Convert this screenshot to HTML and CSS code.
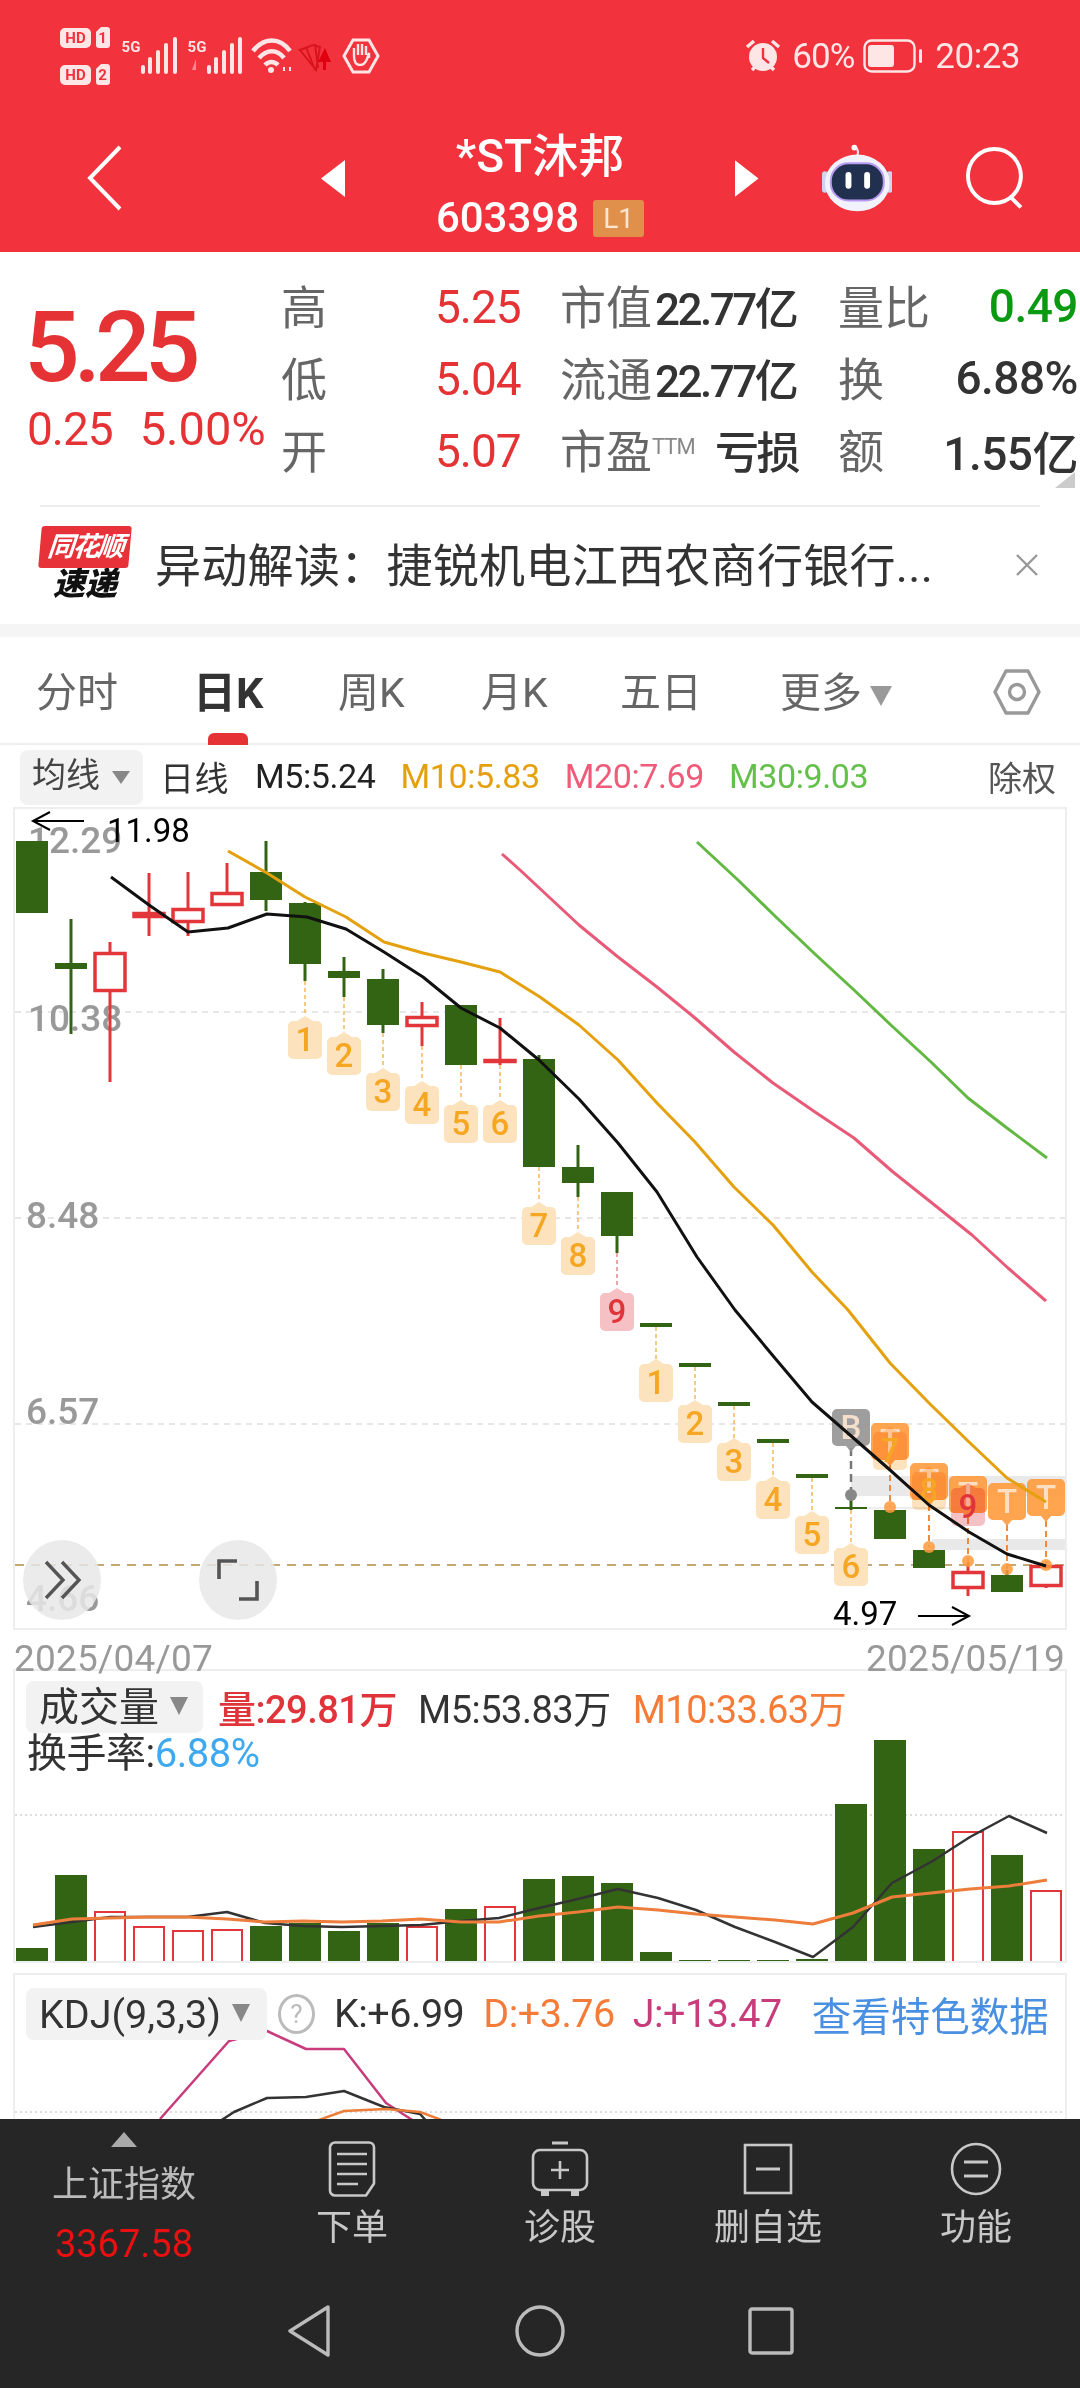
FILE: index.html
```html
<!DOCTYPE html>
<html lang="zh-CN">
<head>
    <meta charset="UTF-8">
    <meta name="viewport" content="width=device-width, initial-scale=1.0">
    <title>*ST沐邦 603398</title>
    <link rel="stylesheet" href="styles.css">
</head>
<body>
<div class="page">
    <div class="topbar">
        <div class="status">
            <svg class="status-left" width="320" height="60" viewBox="60 27 320 60">
                <rect x="60" y="28" width="31" height="20" rx="5" fill="#ffe6e6"/>
                <text x="75.5" y="43" class="hd">HD</text>
                <path d="M96 32l5-5h6a3 3 0 0 1 3 3v15a3 3 0 0 1-3 3h-8a3 3 0 0 1-3-3z" fill="#ffe6e6"/>
                <text x="102.5" y="43" class="hd">1</text>
                <rect x="60" y="65" width="31" height="20" rx="5" fill="#ffe6e6"/>
                <text x="75.5" y="80" class="hd">HD</text>
                <path d="M96 69l5-5h6a3 3 0 0 1 3 3v15a3 3 0 0 1-3 3h-8a3 3 0 0 1-3-3z" fill="#ffe6e6"/>
                <text x="102.5" y="80" class="hd">2</text>
                <text x="131" y="52" class="net">5G</text>
                <path d="M143 72v-5M150 72v-13M158 72v-20M166 72v-27M175 72v-33" stroke="#ffe6e6" stroke-width="4" stroke-linecap="round"/>
                <text x="197" y="52" class="net">5G</text>
                <path d="M192 70l4-11v11z" fill="#f98a90"/>
                <path d="M209 72v-5M216 72v-13M224 72v-20M232 72v-27M240 72v-33" stroke="#ffe6e6" stroke-width="4" stroke-linecap="round"/>
                <path d="M253 51c11-14 27-14 37 0M259 58c8-9 18-9 25 0M265 65c4-4 9-4 13 0" fill="none" stroke="#ffe6e6" stroke-width="4.5"/>
                <circle cx="271" cy="70" r="3" fill="#ffe6e6"/>
                <path d="M284 67v4M290 67v4" stroke="#ffe6e6" stroke-width="2"/>
                <path d="M300 50l13-5 7 2-4 23zM306 47l9 23M315 44l3 24" fill="none" stroke="#d9141f" stroke-width="2"/>
                <path d="M325 48l6 14 -5 0 0 8 -3 0 0 -8 -5 0z" fill="#e0000f"/>
                <path d="M353 40h16l9 16-9 16h-16l-9-16z" fill="none" stroke="#ffe6e6" stroke-width="3"/>
                <path d="M354 56v-8M358 55v-11M362 55v-11M366 55v-9M369 58v-5l-2 6c-2 5-4 6-7 6-4 0-6-3-6-9" fill="none" stroke="#ffe6e6" stroke-width="2.4"/>
            </svg>
            <div class="status-right">
                <svg width="36" height="36" viewBox="0 0 36 36">
                    <circle cx="18" cy="19" r="14" fill="#ffe6e6"/>
                    <path d="M18 10v10l6 5" fill="none" stroke="#f2323c" stroke-width="2.4"/>
                    <path d="M2 9l7-6M34 9l-7-6M7 32l3-3M29 32l-3-3" stroke="#ffe6e6" stroke-width="3.4"/>
                </svg>
                <span class="pct">60%</span>
                <svg width="62" height="34" viewBox="0 0 62 34">
                    <rect x="1.5" y="1.5" width="50" height="31" rx="7" fill="none" stroke="#ffe6e6" stroke-width="2.4"/>
                    <rect x="5" y="6" width="26" height="22" rx="3" fill="#ffe6e6"/>
                    <rect x="56" y="10" width="3" height="14" rx="1.5" fill="#ffe6e6"/>
                </svg>
                <span class="clock">20:23</span>
            </div>
        </div>
        <div class="nav">
            <div class="nav-side nav-left">
                <svg width="36" height="66" viewBox="0 0 36 66">
                    <path d="M33 2L3 33l30 31" fill="none" stroke="#fff" stroke-width="4"/>
                </svg>
                <svg class="tri" width="24" height="37" viewBox="0 0 24 37"><path d="M24 0v37L0 18.5z" fill="#fff"/></svg>
            </div>
            <div class="nav-title">
                <div class="stock-name">*ST沐邦</div>
                <div class="stock-code">603398<span class="level">L1</span></div>
            </div>
            <div class="nav-side nav-right">
                <svg class="tri" width="24" height="37" viewBox="0 0 24 37"><path d="M0 0v37l24-18.5z" fill="#fff"/></svg>
                <svg class="robot" width="72" height="68" viewBox="0 0 72 68">
                    <path d="M35 12c3-3 2-6 0-9" fill="none" stroke="#e9e9f7" stroke-width="2"/>
                    <circle cx="33" cy="3" r="3" fill="#fff"/>
                    <rect x="0" y="27" width="6" height="22" rx="3" fill="#cfd3ef"/>
                    <rect x="66" y="27" width="6" height="22" rx="3" fill="#cfd3ef"/>
                    <ellipse cx="36" cy="39" rx="33" ry="29" fill="#f1f2fb"/>
                    <rect x="9" y="19" width="54" height="38" rx="18" fill="#22304f" stroke="#b89bf0" stroke-width="2"/>
                    <rect x="24" y="28" width="6" height="17" rx="3" fill="#fff"/>
                    <rect x="43" y="28" width="6" height="17" rx="3" fill="#fff"/>
                </svg>
                <svg width="60" height="62" viewBox="0 0 60 62">
                    <ellipse cx="29" cy="29" rx="27" ry="27.5" fill="none" stroke="#fff" stroke-width="4"/>
                    <path d="M45 50l11 11" stroke="#fff" stroke-width="4"/>
                </svg>
            </div>
        </div>
    </div>

    <div class="quote">
        <div class="price">
            <div class="price-big">5.25</div>
            <div class="price-sub"><span class="chg">0.25</span><span class="pctchg">5.00%</span></div>
        </div>
        <div class="stats">
            <span class="lbl">高</span><span class="val up">5.25</span><span class="lbl">市值</span><span class="num">22.77亿</span><span></span><span class="lbl">量比</span><span class="num end down">0.49</span>
            <span class="lbl">低</span><span class="val up">5.04</span><span class="lbl">流通</span><span class="num">22.77亿</span><span></span><span class="lbl">换</span><span class="num end">6.88%</span>
            <span class="lbl">开</span><span class="val up">5.07</span><span class="lbl">市盈<sup class="ttm">TTM</sup></span><span class="num loss">亏损</span><span></span><span class="lbl">额</span><span class="num end">1.55亿</span>
        </div>
        <div class="corner"></div>
    </div>

    <div class="news">
        <div class="logo">
            <div class="logo-top">同花顺</div>
            <div class="logo-bottom">速递</div>
        </div>
        <div class="news-text">异动解读：捷锐机电江西农商行银行...</div>
        <svg class="news-close" width="24" height="24" viewBox="0 0 24 24"><path d="M2 2l20 20M22 2L2 22" stroke="#999" stroke-width="2.4"/></svg>
    </div>
    <div class="band"></div>

    <div class="tabs">
        <span class="tab t1">分时</span>
        <span class="tab t2 active">日K</span>
        <span class="tab t3">周K</span>
        <span class="tab t4">月K</span>
        <span class="tab t5">五日</span>
        <span class="tab t6">更多<i class="caret big"></i></span>
        <svg class="hex" width="48" height="46" viewBox="0 0 48 46">
            <path d="M13 2h22l11 21-11 21H13L2 23z" fill="none" stroke="#999" stroke-width="3.4" stroke-linejoin="round"/>
            <circle cx="24" cy="23" r="7.5" fill="none" stroke="#999" stroke-width="3.4"/>
        </svg>
    </div>

    <div class="legend">
        <span class="chip">均线<i class="caret"></i></span>
        <span class="ma-name">日线</span>
        <span class="ma m5">M5:5.24</span>
        <span class="ma m10">M10:5.83</span>
        <span class="ma m20">M20:7.69</span>
        <span class="ma m30">M30:9.03</span>
        <span class="fq">除权</span>
    </div>

    <div class="frame frame-k">
        <svg id="kline" width="1050" height="819" viewBox="15 809 1050 819"></svg>
        <span class="round-btn btn-a">
            <svg width="40" height="40" viewBox="0 0 40 40"><path d="M4 2l17 18L4 38M20 2l17 18-17 18" fill="none" stroke="#555" stroke-width="3.4"/></svg>
        </span>
        <span class="round-btn btn-b">
            <svg width="42" height="42" viewBox="0 0 42 42"><path d="M2 20V2h18M40 22v18H22" fill="none" stroke="#555" stroke-width="3.6"/></svg>
        </span>
    </div>
    <div class="dates"><span>2025/04/07</span><span>2025/05/19</span></div>

    <div class="frame frame-vol">
        <svg id="vol" width="1050" height="290" viewBox="15 1671 1050 290"></svg>
        <div class="vol-head">
            <span class="chip chip-lg">成交量<i class="caret small"></i></span>
            <span class="vh red">量:29.81万</span>
            <span class="vh dark">M5:53.83万</span>
            <span class="vh orange">M10:33.63万</span>
        </div>
        <div class="turnover">换手率:<span class="blue">6.88%</span></div>
    </div>

    <div class="frame frame-kdj">
        <svg id="kdj" width="1050" height="144" viewBox="15 1975 1050 144"></svg>
        <div class="kdj-head">
            <span class="chip chip-lg chip-kdj">KDJ(9,3,3)<i class="caret small"></i></span>
            <span class="help">?</span>
            <span class="vh dark">K:+6.99</span>
            <span class="vh orange">D:+3.76</span>
            <span class="vh magenta">J:+13.47</span>
            <span class="more">查看特色数据</span>
        </div>
    </div>

    <div class="footer">
        <div class="foot-tabs">
            <div class="foot-index">
                <i class="index-tri"></i>
                <div class="index-name">上证指数</div>
                <div class="index-val">3367.58</div>
            </div>
            <div class="foot-item">
                <svg width="48" height="56" viewBox="0 0 48 56">
                    <path d="M7 1.5h34a5 5 0 0 1 5 5v36l-8 12H7a5 5 0 0 1-5-5v-43a5 5 0 0 1 5-5z" fill="none" stroke="#c8c8c8" stroke-width="2.6"/>
                    <path d="M9 13h30M9 23h30M9 33h30M9 43h21" stroke="#c8c8c8" stroke-width="2.6"/>
                </svg>
                <span>下单</span>
            </div>
            <div class="foot-item">
                <svg width="58" height="56" viewBox="0 0 58 56">
                    <path d="M21 2h16" stroke="#c8c8c8" stroke-width="3"/>
                    <rect x="2" y="9" width="54" height="40" rx="7" fill="none" stroke="#c8c8c8" stroke-width="2.6"/>
                    <path d="M29 20v18M20 29h18" stroke="#c8c8c8" stroke-width="2.6"/>
                    <path d="M10 49v6h8v-6M40 49v6h8v-6" fill="#c8c8c8"/>
                </svg>
                <span>诊股</span>
            </div>
            <div class="foot-item">
                <svg width="50" height="52" viewBox="0 0 50 52">
                    <rect x="2" y="2" width="46" height="48" fill="none" stroke="#c8c8c8" stroke-width="2.6"/>
                    <path d="M13 26h24" stroke="#c8c8c8" stroke-width="3"/>
                </svg>
                <span>删自选</span>
            </div>
            <div class="foot-item">
                <svg width="52" height="54" viewBox="0 0 52 54">
                    <ellipse cx="26" cy="27" rx="24" ry="25" fill="none" stroke="#c8c8c8" stroke-width="2.6"/>
                    <path d="M14 20h24M14 34h24" stroke="#c8c8c8" stroke-width="3"/>
                </svg>
                <span>功能</span>
            </div>
        </div>
        <div class="sysnav">
            <span class="sys"><svg width="44" height="52" viewBox="0 0 44 52"><path d="M41 2L3 26l38 24z" fill="none" stroke="#bbb" stroke-width="3.4" stroke-linejoin="round"/></svg></span>
            <span class="sys"><svg width="50" height="52" viewBox="0 0 50 52"><ellipse cx="25" cy="26" rx="23" ry="24" fill="none" stroke="#bbb" stroke-width="3.4"/></svg></span>
            <span class="sys"><svg width="46" height="48" viewBox="0 0 46 48"><rect x="2" y="2" width="42" height="44" rx="2" fill="none" stroke="#bbb" stroke-width="3.4"/></svg></span>
        </div>
    </div>
</div>
<script src="chart.js"></script>
</body>
</html>
```

FILE: styles.css
```css
* {
    box-sizing: border-box;
}
body {
    margin: 0;
    background-color: #fff;
    font-family: Roboto, "Noto Sans CJK SC", sans-serif;
    color: #333;
}
.page {
    width: 1080px;
    height: 2388px;
    overflow: hidden;
    display: flex;
    flex-direction: column;
}

/* header */
.topbar {
    height: 252px;
    background-color: #f2323c;
    color: #fff;
}
.status {
    height: 100px;
    display: flex;
    justify-content: space-between;
    padding: 27px 60px 0 60px;
}
.status-left {
    display: block;
}
.hd {
    font-size: 15px;
    font-weight: 700;
    fill: #f2323c;
    text-anchor: middle;
}
.net {
    font-size: 15px;
    font-weight: 700;
    fill: #ffe6e6;
    text-anchor: middle;
}
.status-right {
    display: flex;
    align-items: center;
    height: 58px;
    color: #ffe6e6;
    font-size: 35px;
}
.pct {
    margin-left: 11px;
    margin-right: 9px;
    letter-spacing: -1px;
}
.clock {
    margin-left: 10px;
    letter-spacing: -0.5px;
}
.nav {
    height: 152px;
    display: flex;
}
.nav-side {
    width: 345px;
    display: flex;
    align-items: center;
    height: 152px;
    padding-top: 4px;
}
.nav-left {
    padding-left: 87px;
    justify-content: space-between;
}
.nav-right {
    padding-right: 55px;
}
.robot {
    margin-left: 63px;
    margin-right: 74px;
}
.nav-title {
    width: 390px;
    text-align: center;
    padding-top: 30px;
}
.stock-name {
    font-size: 46px;
    line-height: 52px;
    font-weight: 500;
}
.stock-code {
    font-size: 42px;
    line-height: 44px;
    margin-top: 14px;
    font-weight: 500;
    display: flex;
    justify-content: center;
    align-items: center;
}
.level {
    width: 51px;
    height: 37px;
    margin-left: 14px;
    background-color: #e0904a;
    border-radius: 3px;
    font-size: 28px;
    line-height: 37px;
    font-weight: 400;
    color: #fbe6d3;
}

/* quote block */
.quote {
    height: 253px;
    position: relative;
    display: flex;
}
.price {
    width: 281px;
    padding-left: 27px;
}
.price-big {
    margin-top: 40px;
    margin-left: -3px;
    font-size: 98px;
    line-height: 112px;
    font-weight: 500;
    letter-spacing: -6px;
    color: #e53234;
}
.price-sub {
    margin-top: -2px;
    display: flex;
    gap: 27px;
    font-size: 46px;
    line-height: 54px;
    color: #e53234;
}
.chg {
    letter-spacing: -1px;
}
.pctchg {
    font-size: 47px;
}
.stats {
    padding-top: 16px;
    display: grid;
    grid-template-columns: 154px 125px 95px 143px 40px 95px 145px;
    grid-auto-rows: 72px;
    align-items: center;
    font-size: 46px;
}
.lbl {
    color: #666;
    white-space: nowrap;
}
.ttm {
    font-size: 22px;
    vertical-align: 14px;
    line-height: 0;
    color: #888;
    letter-spacing: -1px;
}
.val {
    padding-top: 5px;
    letter-spacing: -1px;
}
.up {
    color: #e53234;
}
.num {
    padding-top: 4px;
    font-size: 44px;
    letter-spacing: -2.5px;
    white-space: nowrap;
    font-weight: 500;
}
.loss {
    text-align: right;
}
.end {
    font-size: 46px;
    letter-spacing: -0.5px;
    text-align: right;
}
.down {
    color: #0a9a12;
}
.corner {
    position: absolute;
    right: 5px;
    bottom: 17px;
    width: 0;
    height: 0;
    border-left: 20px solid transparent;
    border-bottom: 16px solid #ccc;
}

/* news row */
.news {
    height: 119px;
    position: relative;
    display: flex;
    align-items: center;
    padding-left: 40px;
    padding-bottom: 6px;
}
.news::before {
    content: "";
    position: absolute;
    top: 0;
    left: 40px;
    right: 40px;
    border-top: 2px solid #eee;
}
.logo {
    width: 90px;
    text-align: center;
    padding-top: 2px;
}
.logo-top {
    height: 42px;
    background-color: #e8323a;
    border-radius: 3px;
    color: #fff;
    font-size: 27px;
    line-height: 42px;
    font-weight: 700;
    font-style: italic;
    letter-spacing: -2px;
    transform: skewX(-5deg);
}
.logo-bottom {
    font-size: 32px;
    line-height: 32px;
    font-weight: 900;
    font-style: italic;
    color: #111;
}
.news-text {
    margin-left: 25px;
    font-size: 46px;
    letter-spacing: 0.3px;
    color: #333;
    white-space: nowrap;
}
.news-close {
    position: absolute;
    left: 1015px;
    top: 48px;
}
.band {
    height: 13px;
    background-color: #f5f5f5;
}

/* period tabs */
.tabs {
    height: 108px;
    position: relative;
    border-bottom: 2px solid #eee;
    font-size: 41px;
    color: #666;
}
.tab {
    position: absolute;
    top: 26px;
    line-height: 60px;
    white-space: nowrap;
}
.t1 { left: 36px; }
.t2 { left: 193px; }
.t3 { left: 338px; }
.t4 { left: 481px; }
.t5 { left: 620px; }
.t6 { left: 780px; }
.active {
    font-size: 43px;
    color: #333;
    font-weight: 700;
}
.active::after {
    content: "";
    position: absolute;
    left: 15px;
    top: 70px;
    width: 40px;
    height: 12px;
    border-radius: 6px 6px 0 0;
    background-color: #e53234;
}
.hex {
    position: absolute;
    left: 993px;
    top: 32px;
}
.caret {
    display: inline-block;
    width: 0;
    height: 0;
    margin-left: 12px;
    vertical-align: middle;
    border-left: 9px solid transparent;
    border-right: 9px solid transparent;
    border-top: 13px solid #888;
}
.caret.big {
    margin-left: 8px;
    border-left-width: 11px;
    border-right-width: 11px;
    border-top-width: 20px;
    border-top-color: #999;
}
.caret.small {
    margin-left: 11px;
    border-top-width: 18px;
    vertical-align: 6px;
}

/* moving average legend */
.legend {
    height: 62px;
    position: relative;
    font-size: 34px;
    display: flex;
    align-items: center;
    white-space: nowrap;
}
.chip {
    background-color: #f2f2f2;
    border-radius: 8px;
    color: #444;
}
.legend .chip {
    margin-left: 20px;
    width: 123px;
    height: 55px;
    margin-top: 2px;
    padding-left: 12px;
    line-height: 50px;
}
.ma-name {
    margin-left: 17px;
    letter-spacing: 0.5px;
    color: #333;
}
.ma {
    letter-spacing: -0.4px;
}
.m5 { margin-left: 26px; color: #222; }
.m10 { margin-left: 25px; color: #e5a00d; }
.m20 { margin-left: 25px; color: #ef5b78; }
.m30 { margin-left: 25px; color: #63c04a; }
.fq {
    position: absolute;
    left: 988px;
    color: #555;
}

/* chart panels */
.frame {
    position: relative;
    width: 1054px;
    margin-left: 13px;
    border: 2px solid #eee;
    flex: none;
}
.frame svg {
    display: block;
}
.frame-k {
    height: 823px;
}
.frame-vol {
    height: 294px;
}
.frame-kdj {
    height: 146px;
    margin-top: 10px;
    border-bottom: 0;
}
.round-btn {
    position: absolute;
    top: 731px;
    width: 78px;
    height: 80px;
    border-radius: 50%;
    background-color: rgba(232, 232, 232, 0.85);
    display: flex;
    align-items: center;
    justify-content: center;
}
.btn-a { left: 8px; }
.btn-b { left: 184px; }
.dates {
    height: 39px;
    position: relative;
    z-index: 1;
    padding: 11px 15px 0 14px;
    display: flex;
    justify-content: space-between;
    font-size: 37px;
    line-height: 36px;
    letter-spacing: 0.2px;
    color: #999;
}
.vol-head {
    position: absolute;
    left: 11px;
    top: 8px;
    display: flex;
    align-items: center;
    font-size: 38px;
    white-space: nowrap;
}
.chip-lg {
    display: block;
    width: 177px;
    height: 52px;
    padding-left: 13px;
    font-size: 40px;
    line-height: 54px;
    color: #333;
}
.vh {
    letter-spacing: -0.5px;
}
.vol-head .red { margin-left: 15px; color: #e0343a; font-weight: 500; }
.vol-head .dark { margin-left: 21px; color: #333; }
.vol-head .orange { margin-left: 22px; color: #f57b38; }
.turnover {
    position: absolute;
    left: 12px;
    top: 58px;
    font-size: 40px;
    line-height: 50px;
    color: #333;
    white-space: nowrap;
    letter-spacing: -0.5px;
}
.blue {
    color: #3fa9ef;
}
.kdj-head {
    position: absolute;
    left: 11px;
    top: 10px;
    display: flex;
    align-items: center;
    font-size: 39.5px;
    white-space: nowrap;
}
.chip-kdj {
    width: 241px;
    font-size: 39.5px;
    letter-spacing: 0;
}
.help {
    width: 37px;
    height: 40px;
    margin-left: 11px;
    border: 3px solid #bbb;
    border-radius: 50%;
    font-size: 26px;
    line-height: 34px;
    text-align: center;
    color: #bbb;
}
.kdj-head .dark { margin-left: 19px; color: #333; }
.kdj-head .orange { margin-left: 19px; color: #f57b38; }
.kdj-head .magenta { margin-left: 18px; color: #c93c7c; }
.more {
    margin-left: 30px;
    font-size: 39.5px;
    color: #4a90e2;
}

/* svg text */
.axis {
    font-family: Roboto, sans-serif;
    font-size: 37px;
    font-weight: 500;
    fill: #999;
}
.mark {
    font-family: Roboto, sans-serif;
    font-size: 33px;
    font-weight: 400;
    fill: #000;
}
.badge-num {
    font-family: Roboto, sans-serif;
    font-size: 33px;
    font-weight: 500;
    text-anchor: middle;
}
.mult {
    mix-blend-mode: multiply;
}

/* bottom bar */
.footer {
    height: 269px;
    flex: none;
    background-color: #262626;
    color: #c8c8c8;
}
.foot-tabs {
    height: 178px;
    display: flex;
}
.foot-index {
    width: 248px;
    text-align: center;
    padding-top: 13px;
}
.index-tri {
    display: block;
    width: 0;
    height: 0;
    margin: 0 auto;
    border-left: 13px solid transparent;
    border-right: 13px solid transparent;
    border-bottom: 15px solid #aaa;
}
.index-name {
    margin-top: 13px;
    font-size: 36px;
    line-height: 50px;
    color: #bbb;
}
.index-val {
    margin-top: 10px;
    font-size: 38px;
    line-height: 48px;
    color: #e81010;
}
.foot-item {
    width: 208px;
    height: 110px;
    margin-top: 22px;
    display: flex;
    flex-direction: column;
    align-items: center;
    font-size: 36px;
    line-height: 50px;
    color: #c8c8c8;
}
.foot-item svg {
    height: 56px;
    flex: none;
}
.foot-item span {
    margin-top: 6px;
}
.sysnav {
    display: flex;
    justify-content: center;
    padding-top: 8px;
}
.sys {
    width: 231px;
    display: flex;
    justify-content: center;
    align-items: center;
    height: 52px;
}
```

FILE: chart.js
```js
// colours of the candles and the lines
var GREEN = '#336414';
var RED = '#e3363b';
var SVGNS = 'http://www.w3.org/2000/svg';

// x centre of candle number i
function cx(i) {
    return 32 + 39 * i;
}

function add(svg, tag, attrs, text) {
    var el = document.createElementNS(SVGNS, tag);
    for (var k in attrs) {
        el.setAttribute(k, attrs[k]);
    }
    if (text !== undefined) {
        el.textContent = text;
    }
    svg.appendChild(el);
    return el;
}

function line(svg, x1, y1, x2, y2, color, width, dash) {
    var attrs = { x1: x1, y1: y1, x2: x2, y2: y2, stroke: color, 'stroke-width': width };
    if (dash) {
        attrs['stroke-dasharray'] = dash;
    }
    add(svg, 'line', attrs);
}

function poly(svg, pts, color, width) {
    add(svg, 'polyline', {
        points: pts.join(' '),
        fill: 'none',
        stroke: color,
        'stroke-width': width,
        'stroke-linejoin': 'round'
    });
}

// day candle: [wick top, wick bottom, body top, body bottom, up?]
var candles = [
    [841, 913, 841, 913, 0],
    [919, 1034, 963, 969, 0],
    [942, 1082, 952, 992, 1],
    [873, 936, 912, 918, 1],
    [872, 936, 908, 923, 1],
    [863, 906, 892, 906, 1],
    [841, 911, 872, 900, 0],
    [902, 981, 903, 964, 0],
    [957, 997, 971, 978, 0],
    [969, 1033, 979, 1025, 0],
    [1002, 1046, 1016, 1027, 1],
    [1005, 1065, 1005, 1065, 0],
    [1018, 1065, 1059, 1061, 1],
    [1055, 1167, 1059, 1167, 0],
    [1145, 1197, 1167, 1183, 0],
    [1192, 1253, 1192, 1236, 0],
    [1323, 1327, 1323, 1327, 0],
    [1363, 1367, 1363, 1367, 0],
    [1402, 1406, 1402, 1406, 0],
    [1439, 1443, 1439, 1443, 0],
    [1474, 1478, 1474, 1478, 0],
    [1497, 1510, 1507, 1509, 0],
    [1510, 1539, 1510, 1539, 0],
    [1550, 1568, 1550, 1568, 0],
    [1562, 1596, 1571, 1589, 1],
    [1570, 1592, 1575, 1592, 0],
    [1565, 1588, 1565, 1587, 1]
];

// sequence badges: [candle, number, tip y, red?]
var badges = [
    [7, 1, 1016], [8, 2, 1032], [9, 3, 1068], [10, 4, 1081], [11, 5, 1100], [12, 6, 1100],
    [13, 7, 1202], [14, 8, 1232], [15, 9, 1288, 1],
    [16, 1, 1359], [17, 2, 1400], [18, 3, 1438], [19, 4, 1476], [20, 5, 1511], [21, 6, 1543]
];

// the last three badges sit on top of the T flags
var lateBadges = [[22, 7, 1427], [23, 8, 1467], [24, 9, 1483, 1]];

// T flags: [candle, top y, circle y]
var tMarks = [[22, 1423, 1507], [23, 1463, 1547], [24, 1476, 1561], [25, 1483, 1569], [26, 1479, 1565]];

var ma5 = ['111,877', '149,905', '188,932', '228,928', '267,914', '307,917', '346,929', '384,952', '423,977', '461,1008', '500,1028', '539,1060', '579,1099', '618,1143', '657,1192', '697,1257', '735,1310', '774,1357', '812,1402', '850,1435', '890,1470', '929,1505', '969,1532', '1007,1554', '1046,1566'];
var ma10 = ['228,851', '267,873', '305,897', '346,917', '384,942', '423,953', '461,962', '500,972', '540,997', '579,1025', '618,1060', '657,1103', '695,1142', '734,1187', '773,1225', '812,1272', '848,1310', '890,1363', '929,1403', '969,1442', '1007,1478', '1046,1502'];
var ma20 = ['502,854', '520,870', '579,925', '618,957', '657,987', '695,1018', '734,1052', '773,1083', '815,1112', '854,1138', '893,1172', '932,1203', '972,1235', '1008,1268', '1046,1301'];
var ma30 = ['697,842', '738,880', '777,918', '816,955', '854,990', '893,1027', '931,1062', '968,1098', '1007,1128', '1047,1158'];

function badgeShape(svg, b, cls) {
    var x = cx(b[0]);
    var attrs = {
        d: 'M' + x + ' ' + b[2] + 'l8 5h4a5 5 0 0 1 5 5v28a5 5 0 0 1-5 5h-24a5 5 0 0 1-5-5v-28a5 5 0 0 1 5-5h4z',
        fill: b[3] ? '#f6c1c4' : '#fde3bd'
    };
    if (cls) {
        attrs['class'] = cls;
    }
    add(svg, 'path', attrs);
}

function badgeDigit(svg, b) {
    add(svg, 'text', {
        x: cx(b[0]),
        y: b[2] + 35,
        'class': 'badge-num',
        fill: b[3] ? '#e0343a' : '#f5a623'
    }, b[1]);
}

function flagBadge(svg, x, top, fill, label) {
    add(svg, 'path', {
        d: 'M' + (x - 14) + ' ' + top + 'h28a5 5 0 0 1 5 5v27a5 5 0 0 1-5 5h-9l-5 6-5-6h-9a5 5 0 0 1-5-5v-27a5 5 0 0 1 5-5z',
        fill: fill,
        'fill-opacity': 0.9
    });
    add(svg, 'text', { x: x, y: top + 30, 'class': 'badge-num', fill: '#fde6d2', 'fill-opacity': 0.9 }, label);
}

function drawKline() {
    var svg = document.getElementById('kline');
    var i;

    // grid
    [1012, 1218, 1424].forEach(function (y) {
        line(svg, 15, y, 1065, y, '#dfdfdf', 1.5, '6 5');
    });

    // price labels under the candles
    add(svg, 'text', { x: 28, y: 853, 'class': 'axis' }, '12.29');
    add(svg, 'text', { x: 28, y: 1031, 'class': 'axis' }, '10.38');
    add(svg, 'text', { x: 26, y: 1228, 'class': 'axis' }, '8.48');
    add(svg, 'text', { x: 26, y: 1424, 'class': 'axis' }, '6.57');
    add(svg, 'text', { x: 26, y: 1611, 'class': 'axis' }, '4.66');

    // grey bands around the last candles
    add(svg, 'rect', { x: 851, y: 1476, width: 214, height: 20, fill: '#e9e9e9' });
    add(svg, 'rect', { x: 932, y: 1539, width: 133, height: 11, fill: '#e9e9e9' });
    line(svg, 851, 1508, 1000, 1508, '#e9e9e9', 1.5);

    // last price line
    line(svg, 15, 1565, 1065, 1565, '#c3a878', 2, '9 7');

    // dotted stems from candle to badge
    badges.forEach(function (b) {
        var c = candles[b[0]];
        line(svg, cx(b[0]), c[1], cx(b[0]), b[2], b[3] ? '#e58a8c' : '#f5b95c', 1.5, '4 3');
    });

    // candles
    for (i = 0; i < candles.length; i++) {
        var c = candles[i];
        var x = cx(i);
        var color = c[4] ? RED : GREEN;
        line(svg, x, c[0], x, c[1], color, 3);
        if (c[4]) {
            add(svg, 'rect', { x: x - 15, y: c[2] + 1.5, width: 30, height: Math.max(c[3] - c[2] - 3, 1), fill: '#fff', stroke: RED, 'stroke-width': 3.5 });
        } else {
            add(svg, 'rect', { x: x - 16, y: c[2], width: 32, height: c[3] - c[2], fill: GREEN });
        }
    }

    // number badges
    badges.forEach(function (b) {
        badgeShape(svg, b);
        badgeDigit(svg, b);
    });

    // T flags, then the last badges tinted over them
    tMarks.forEach(function (t) {
        var x = cx(t[0]);
        line(svg, x, t[1] + 42, x, t[2], '#f08a3c', 2, '6 4');
        add(svg, 'circle', { cx: x, cy: t[2], r: 6, fill: '#ff9a3c', 'fill-opacity': 0.85 });
        flagBadge(svg, x, t[1], '#ff9a3c', 'T');
    });
    lateBadges.forEach(function (b) {
        badgeShape(svg, b, 'mult');
        badgeDigit(svg, b);
    });

    // buy flag
    line(svg, 851, 1448, 851, 1495, '#777', 2.5, '8 5');
    add(svg, 'circle', { cx: 851, cy: 1495, r: 6, fill: '#888' });
    flagBadge(svg, 851, 1409, '#939393', 'B');

    // moving averages
    poly(svg, ma30, '#63b843', 3);
    poly(svg, ma20, '#e85a78', 3);
    poly(svg, ma10, '#e5a00d', 3);
    poly(svg, ma5, '#111', 3);

    // high and low marks
    add(svg, 'path', { d: 'M84 821H33M50 812L33 821L50 830', fill: 'none', stroke: '#000', 'stroke-width': 2 });
    add(svg, 'text', { x: 107, y: 842, 'class': 'mark' }, '11.98');
    add(svg, 'text', { x: 833, y: 1625, 'class': 'mark' }, '4.97');
    add(svg, 'path', { d: 'M918 1616H969M952 1607L969 1616L952 1625', fill: 'none', stroke: '#000', 'stroke-width': 2 });
}

// volume bars: [top y, up?]
var volumes = [
    [1948, 0], [1875, 0], [1911, 1], [1926, 1], [1930, 1], [1929, 1], [1926, 0], [1923, 0], [1931, 0],
    [1923, 0], [1926, 1], [1909, 0], [1906, 1], [1879, 0], [1876, 0], [1883, 0], [1952, 0], [1960, 0],
    [1960, 0], [1960, 0], [1959, 0], [1804, 0], [1740, 0], [1849, 0], [1831, 1], [1855, 0], [1890, 1]
];

var volMa5 = ['33,1927', '72,1922', '110,1917', '148,1917', '187,1917', '227,1912', '265,1923', '303,1926', '342,1927', '382,1926', '421,1925', '461,1921', '499,1918', '539,1908', '578,1899', '618,1889', '658,1898', '696,1910', '735,1927', '775,1942', '813,1957', '853,1927', '892,1883', '931,1862', '970,1837', '1009,1816', '1047,1833'];
var volMa10 = ['33,1925', '72,1919', '110,1918', '148,1917', '187,1917', '227,1919', '265,1922', '303,1921', '342,1922', '382,1921', '421,1919', '461,1922', '499,1922', '539,1916', '578,1912', '618,1907', '658,1910', '696,1914', '735,1917', '775,1920', '813,1924', '853,1913', '892,1897', '931,1893', '970,1889', '1009,1886', '1047,1880'];

function drawVolume() {
    var svg = document.getElementById('vol');
    line(svg, 15, 1815, 1065, 1815, '#ddd', 2, '2 3');
    volumes.forEach(function (v, i) {
        if (v[1]) {
            add(svg, 'rect', { x: cx(i) - 15, y: v[0] + 1, width: 30, height: 1961 - v[0], fill: '#fff', stroke: RED, 'stroke-width': 2 });
        } else {
            add(svg, 'rect', { x: cx(i) - 16, y: v[0], width: 32, height: 1961 - v[0], fill: GREEN });
        }
    });
    poly(svg, volMa5, '#333', 2.5);
    poly(svg, volMa10, '#ed7d3a', 3);
}

function drawKdj() {
    var svg = document.getElementById('kdj');
    line(svg, 15, 2112, 1065, 2112, '#ddd', 2, '2 3');
    poly(svg, ['160,2119', '229,2041', '267,2031', '306,2049', '344,2049', '386,2103', '420,2125'], '#c93c7c', 2.5);
    poly(svg, ['214,2125', '234,2112', '267,2098', '306,2097', '344,2091', '384,2107', '420,2114', '430,2125'], '#333', 2.5);
    poly(svg, ['305,2125', '344,2111', '386,2109', '420,2112', '455,2125'], '#ed7d3a', 2.5);
}

drawKline();
drawVolume();
drawKdj();
```
